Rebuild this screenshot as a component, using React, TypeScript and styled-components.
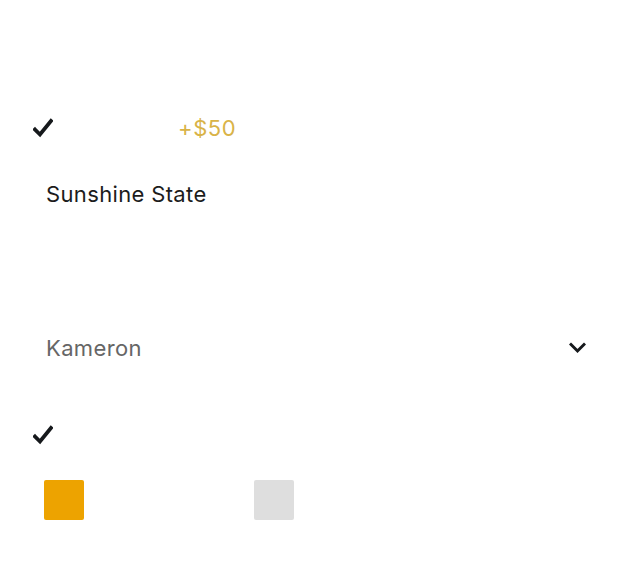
import React from 'react';
import styled, { createGlobalStyle } from 'styled-components';

const GlobalStyle = createGlobalStyle`
  body {
    margin: 0;
    background: #fff;
    font-family: Inter, "Noto Sans", sans-serif;
    color: #1a1a1a;
  }
`;

const Page = styled.div`
  width: 640px;
  height: 561px;
  box-sizing: border-box;
  padding: 108px 54px 0 33px;
  display: flex;
  flex-direction: column;
`;

const OptionRow = styled.div`
  height: 40px;
  display: flex;
  align-items: center;
`;

const CheckBox = styled.span`
  width: 145px;
  display: flex;
  align-items: center;
`;

const Price = styled.span`
  font-size: 22px;
  color: #d9b347;
  letter-spacing: 0.6px;
`;

const Label = styled.div`
  margin-top: 26px;
  padding-left: 13px;
  height: 40px;
  line-height: 40px;
  font-size: 22px;
  letter-spacing: 0.35px;
  color: #1c1c1c;
`;

const Select = styled.div`
  margin-top: 114px;
  padding-left: 13px;
  height: 40px;
  display: flex;
  align-items: center;
  justify-content: space-between;
`;

const SelectValue = styled.span`
  font-size: 22px;
  letter-spacing: 0.35px;
  color: #666;
`;

const CheckRow = styled.div<{ $top: number }>`
  margin-top: ${(p) => p.$top}px;
  height: 40px;
  display: flex;
  align-items: center;
`;

const Swatches = styled.div`
  margin-top: 25px;
  padding-left: 11px;
  display: flex;
  gap: 170px;
`;

const Swatch = styled.span<{ $color: string }>`
  width: 40px;
  height: 40px;
  border-radius: 2px;
  background: ${(p) => p.$color};
`;

const Check = () => (
  <svg width="20" height="20" viewBox="0 0 20 20">
    <path d="M2 11.5 L7 16.5 L18 3" fill="none" stroke="#16191c" strokeWidth="3.8" strokeLinecap="square" />
  </svg>
);

const Chevron = () => (
  <svg width="17" height="12" viewBox="0 0 17 12">
    <path d="M2 2.5 L8.5 9 L15 2.5" fill="none" stroke="#16191c" strokeWidth="3" strokeLinecap="square" />
  </svg>
);

const App: React.FC = () => (
  <>
    <GlobalStyle />
    <Page>
      <OptionRow>
        <CheckBox>
          <Check />
        </CheckBox>
        <Price>+$50</Price>
      </OptionRow>
      <Label>Sunshine State</Label>
      <Select>
        <SelectValue>Kameron</SelectValue>
        <Chevron />
      </Select>
      <CheckRow $top={47}>
        <Check />
      </CheckRow>
      <Swatches>
        <Swatch $color="#eda300" />
        <Swatch $color="#dedede" />
      </Swatches>
    </Page>
  </>
);

export default App;
